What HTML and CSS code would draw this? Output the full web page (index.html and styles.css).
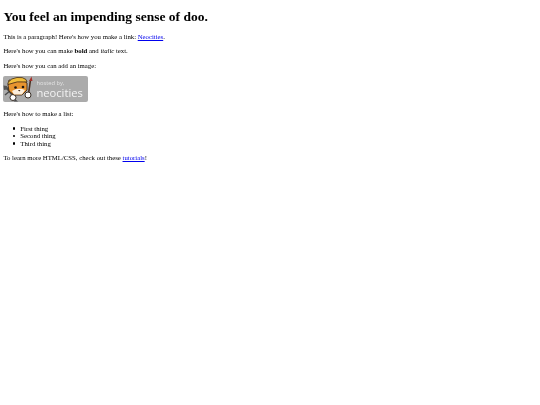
FILE: index.html
```html
<!doctype html>
<html lang="en">
<head>
	<meta charset="UTF-8">
	<title>You feel an impending sense of doo.</title>
	<link rel="stylesheet" href="styles.css">
</head>
<body>
	<h1>You feel an impending sense of doo.</h1>
	<p>This is a paragraph! Here's how you make a link: <a href="#">Neocities</a>.</p>
	<p>Here's how you can make <strong>bold</strong> and <em>italic</em> text.</p>
	<p>Here's how you can add an image:</p>
	<div class="badge">
		<svg class="cat" width="33" height="26" viewBox="0 0 33 26">
			<!-- wrench -->
			<path d="M3 11 L12 22" stroke="#4a4a4a" stroke-width="2"/>
			<path d="M0.5 9.5 L4 10 L4 13.5 L1 14 Z" fill="#555"/>
			<path d="M2 19 L8 14" stroke="#4a4a4a" stroke-width="1.4"/>
			<circle cx="10" cy="21.5" r="3" fill="#fff" stroke="#3a3028" stroke-width="1"/>
			<path d="M12 23 L15 25.5 L11 25.5 Z" fill="#4a4a4a"/>
			<!-- brush -->
			<path d="M27.5 4 L25.5 18" stroke="#4a3020" stroke-width="1.6"/>
			<path d="M28.5 0.5 L29.5 5 L26 5 Z" fill="#a5302a"/>
			<circle cx="25" cy="19" r="3" fill="#fff" stroke="#3a3028" stroke-width="1"/>
			<!-- head -->
			<path d="M5 9 L6 4 L12 5 L20 4 L24 7 L24 14 L19 19 L11 19 L6 15 Z" fill="#e8952f" stroke="#3f2a18" stroke-width="0.9"/>
			<path d="M9 15 Q15 11 22 14 L19 18.5 L11 18.5 Z" fill="#fbeedd"/>
			<circle cx="12.5" cy="11.5" r="1.3" fill="#1d1510"/>
			<circle cx="20" cy="11" r="1.3" fill="#1d1510"/>
			<path d="M15 14 L17.5 14 L16.2 15.5 Z" fill="#3f2a18"/>
			<!-- helmet -->
			<path d="M5 6.5 Q8 2 14 1.5 Q20 0.8 23 3.5 L24 6 Q14 4.5 5 8.5 Z" fill="#f2bf3c" stroke="#3f2a18" stroke-width="0.8"/>
		</svg>
		<div class="badge-text">
			<span class="hosted">hosted by,</span>
			<span class="name">neocities</span>
		</div>
	</div>
	<p>Here's how to make a list:</p>
	<ul>
		<li>First thing</li>
		<li>Second thing</li>
		<li>Third thing</li>
	</ul>
	<p>To learn more HTML/CSS, check out these <a href="#">tutorials</a>!</p>
</body>
</html>
```
FILE: styles.css
```css
body{
	margin: 0 3.4px;
	font-family: "Liberation Serif", serif;
	font-size: 6.75px;
	line-height: 7.5px;
	color: #000;
	filter: blur(0.3px);
}
h1{
	font-size: 13.5px;
	line-height: 15px;
	margin: 9px 0;
}
p{
	margin: 6.75px 0;
}
ul{
	margin: 6.75px 0;
	padding-left: 16.9px;
	list-style: none;
}
li::before{
	content: "";
	display: inline-block;
	width: 2.4px;
	height: 2.4px;
	margin-left: -7.4px;
	margin-right: 5px;
	margin-bottom: 0.8px;
	border-radius: 50%;
	background: #000;
}
a{
	color: #00e;
}
.badge{
	width: 85px;
	height: 26px;
	margin-bottom: 8.5px;
	background: #ababab;
	border-radius: 2px;
	display: flex;
	align-items: center;
	overflow: hidden;
}
.cat{
	flex: none;
}
.badge-text{
	display: flex;
	flex-direction: column;
	font-family: "Open Sans", sans-serif;
	color: #f2f2f2;
}
.hosted{
	font-size: 5.8px;
	line-height: 6.5px;
	color: #e2e2e2;
}
.name{
	font-size: 11.2px;
	line-height: 11px;
}
```
